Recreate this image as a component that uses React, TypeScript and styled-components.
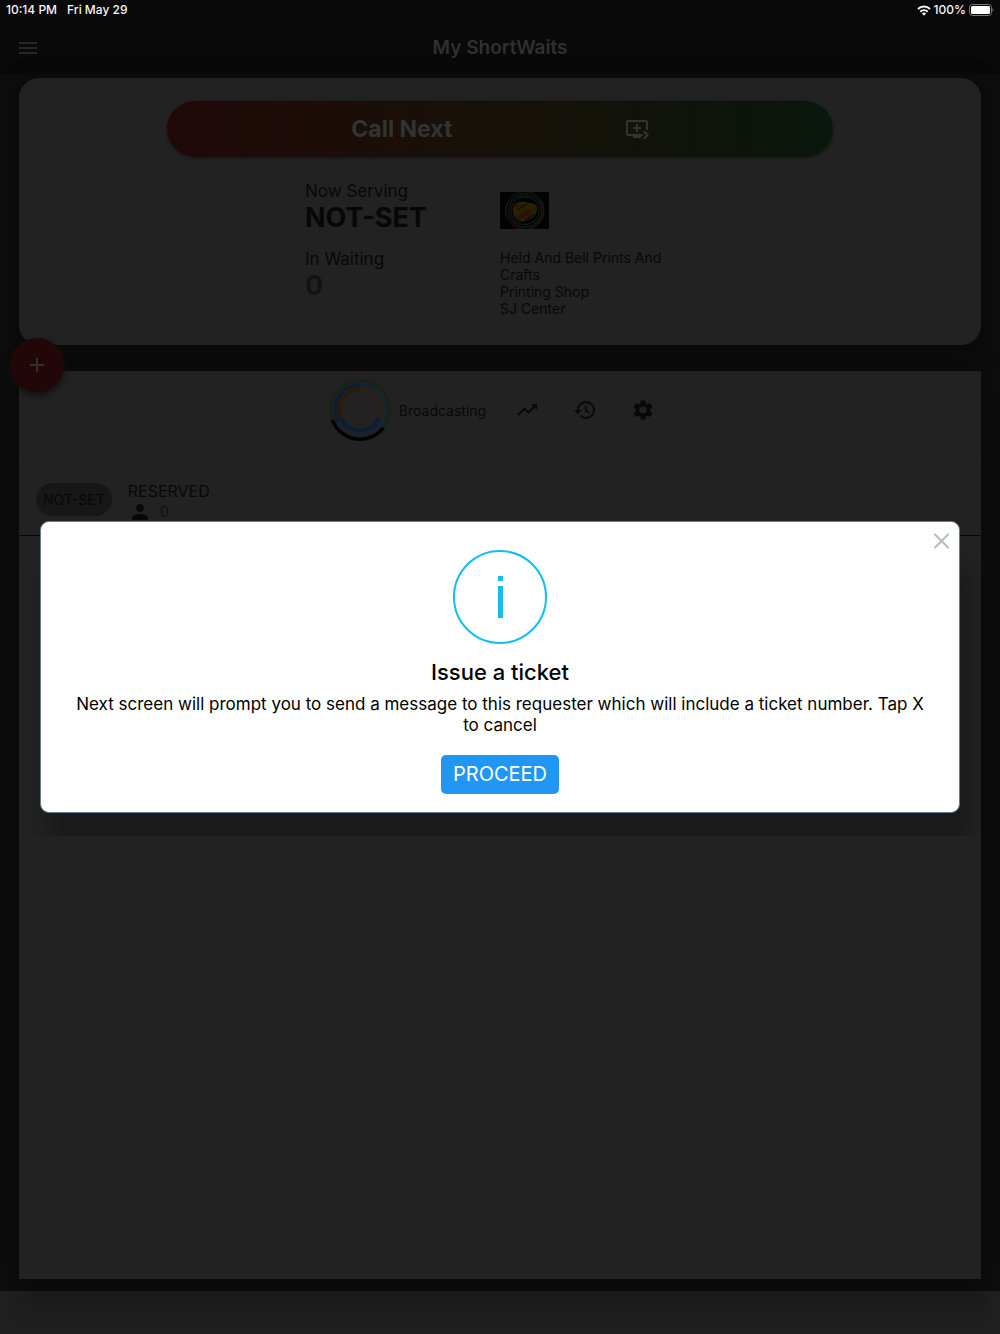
import React from "react";
import styled, { createGlobalStyle } from "styled-components";
import {
  MdMenu,
  MdTrendingUp,
  MdHistory,
  MdSettings,
  MdPerson,
  MdAdd,
  MdQueuePlayNext,
} from "react-icons/md";

const GlobalStyle = createGlobalStyle`
  *, *::before, *::after { box-sizing: border-box; }
  body {
    margin: 0;
    background: #0d0d0d;
    color: #080808;
    font-family: Inter, "Liberation Sans", sans-serif;
  }
  h1, h2, p, dl, dd, dt, ul { margin: 0; padding: 0; }
  button { font: inherit; border: 0; padding: 0; background: none; color: inherit; cursor: pointer; }
`;

const Page = styled.div`
  display: flex;
  flex-direction: column;
  min-height: 100vh;
`;

const StatusBar = styled.div`
  position: relative;
  z-index: 3;
  display: flex;
  justify-content: space-between;
  height: 20px;
  padding: 0 6px;
  background: #090909;
  color: #f4f4f4;
  font-size: 12px;
  font-weight: 500;
  line-height: 20px;
`;

const StatusGroup = styled.div<{ $gap: number }>`
  display: flex;
  align-items: center;
  gap: ${(p) => p.$gap}px;
`;

const Header = styled.header`
  display: grid;
  grid-template-columns: 1fr auto 1fr;
  align-items: center;
  height: 54px;
  padding: 1px 16px 0;
  background: #090909;
  color: #303030;
`;

const MenuButton = styled.button`
  display: flex;
  width: 24px;
  font-size: 24px;
  color: #272727;
`;

const Title = styled.h1`
  font-size: 19px;
  font-weight: 600;
  line-height: 24px;
`;

const Main = styled.main`
  display: flex;
  flex: 1;
  flex-direction: column;
  gap: 26px;
  padding: 4px 19px 12px;
`;

const Summary = styled.section`
  position: relative;
  display: grid;
  grid-template-columns: 2fr 9fr 2fr;
  padding: 23px 0 28px;
  border-radius: 20px;
  background: #222222;
  box-shadow: 0 4px 20px 4px #0a0a0a;
`;

const SummaryBody = styled.div`
  grid-column: 2;
  display: flex;
  flex-direction: column;
  align-items: center;
  gap: 22px;
`;

const CallNext = styled.button`
  display: flex;
  align-items: center;
  justify-content: space-evenly;
  align-self: stretch;
  height: 56px;
  padding: 0 12px;
  border-radius: 28px;
  background: linear-gradient(90deg, #200908, #191009 40%, #13130a 65%, #0a170c);
  box-shadow: 0 1px 3px #141414;
  color: #333333;
  font-size: 23px;
  font-weight: 700;
`;

const Details = styled.div`
  display: grid;
  grid-template-columns: 1fr 1fr;
  width: 390px;
`;

const Stats = styled.dl`
  font-size: 17px;
  line-height: 24px;
`;

const StatValue = styled.dd<{ $dim?: boolean }>`
  margin-bottom: 14px;
  color: ${(p) => (p.$dim ? "#131313" : "#070707")};
  font-size: 27px;
  font-weight: 700;
  line-height: 30px;
`;

const Business = styled.div`
  display: flex;
  flex-direction: column;
  gap: 20px;
  padding-top: 13px;
  font-size: 14px;
  line-height: 17px;
`;

const AddButton = styled.button`
  position: absolute;
  left: -9px;
  bottom: -47px;
  display: grid;
  place-items: center;
  width: 54px;
  height: 54px;
  border-radius: 50%;
  background: #220708;
  box-shadow: 0 3px 6px #0f0f0f;
  color: #303030;
  font-size: 24px;
`;

const Panel = styled.section`
  flex: 1;
  background: #222222;
  box-shadow: 0 4px 20px 4px #0a0a0a;
`;

const Toolbar = styled.div`
  display: flex;
  align-items: center;
  justify-content: center;
  gap: 10px;
  height: 87px;
  padding: 0 4px 8px 0;
  border-bottom: 1px solid #2a2320;
`;

const Broadcast = styled.div`
  display: flex;
  align-items: center;
  gap: 8px;
  padding-right: 7px;
  font-size: 14px;
`;

const ToolButton = styled.button`
  display: grid;
  place-items: center;
  width: 48px;
  height: 48px;
  font-size: 24px;
`;

const Entry = styled.div`
  display: flex;
  align-items: center;
  gap: 16px;
  height: 78px;
  margin: 0 1px;
  padding: 6px 16px 0;
  border-bottom: 1px solid #060606;
`;

const Chip = styled.span`
  padding: 0 7px;
  border-radius: 17px;
  background: #171717;
  font-size: 14px;
  line-height: 33px;
`;

const EntryText = styled.div`
  padding-top: 4px;
  font-size: 16px;
  line-height: 20px;
`;

const Guests = styled.div`
  display: flex;
  align-items: center;
  gap: 8px;
  height: 22px;
  color: #131313;
  font-size: 15px;

  svg { color: #080808; }
`;

const ListArea = styled.div`
  height: 300px;
  padding: 44px 26px 0 44px;
  overflow: hidden;
`;

const ListCard = styled.div`
  height: 100%;
  background: #1a1a1a;
  box-shadow: 0 0 20px 12px #1a1a1a;
`;

const Footer = styled.footer`
  position: relative;
  height: 43px;
  background:
    linear-gradient(90deg, #202020, transparent 36px, transparent calc(100% - 20px), #202020),
    linear-gradient(#1a1a1a, #202020);
`;

const Overlay = styled.div`
  position: fixed;
  inset: 0;
  z-index: 2;
  display: flex;
  align-items: center;
  padding: 0 40px;
`;

const Dialog = styled.div`
  position: relative;
  display: flex;
  flex: 1;
  flex-direction: column;
  align-items: center;
  padding: 28px 28px 18px;
  border: 1px solid #5f7f8c;
  border-radius: 9px;
  background: #ffffff;
  color: #000000;
  text-align: center;
`;

const InfoIcon = styled.svg`
  width: 94px;
  height: 94px;
`;

const DialogTitle = styled.h2`
  margin-top: 12px;
  font-size: 22px;
  font-weight: 500;
  line-height: 32px;
`;

const Message = styled.p`
  margin-top: 6px;
  font-size: 17px;
  line-height: 21px;
`;

const Proceed = styled.button`
  margin-top: 19px;
  padding: 0 12px;
  border-radius: 5px;
  background: #2196f3;
  color: #ffffff;
  font-size: 20px;
  line-height: 39px;
`;

const CloseButton = styled.button`
  position: absolute;
  top: 8px;
  right: 7px;
  display: flex;
  color: #b3bdc9;
`;

function Wifi() {
  return (
    <svg width="14" height="11" viewBox="0 0 14 11" fill="none" stroke="#f4f4f4" strokeWidth="2">
      <path d="M1 4a8.6 8.6 0 0 1 12 0" />
      <path d="M3.3 6.700a5.300 5.300 0 0 1 7.400 0" />
      <path d="M7 10.800 4.900 8.600a3 3 0 0 1 4.200 0z" fill="#f4f4f4" stroke="none" />
    </svg>
  );
}

function Battery() {
  return (
    <svg width="25" height="12" viewBox="0 0 25 12">
      <rect x=".5" y=".5" width="22" height="11" rx="3" fill="none" stroke="#777" />
      <rect x="2" y="2" width="19" height="8" rx="1.6" fill="#fff" />
      <path d="M23.500 4v4c1.300-.6 1.300-3.400 0-4z" fill="#777" />
    </svg>
  );
}

function Close() {
  return (
    <svg width="22" height="22" viewBox="0 0 22 22" stroke="currentColor" strokeWidth="2">
      <path d="M5 4.500 18 17.500M18 4.500 5 17.500" strokeLinecap="round" />
    </svg>
  );
}

function Rings() {
  return (
    <svg width="62" height="62" viewBox="-31 -31 62 62" fill="none" strokeWidth="3.4">
      <circle r="29.300" stroke="#182219" />
      <path d="M-27.500 10A29.300 29.300 0 0 0 23.300 17.800" stroke="#030303" />
      <circle r="24.800" stroke="#172330" />
      <path d="M0-24.800A24.800 24.800 0 0 0-22 11.500" stroke="#0b1d30" />
      <path d="M0-20.500A20.500 20.500 0 0 0-18.900 8" stroke="#2c1a06" />
      <path d="M0-20.500A20.500 20.500 0 0 1 18.900 8" stroke="#2c2014" />
      <path d="M-18.900 8A20.500 20.500 0 0 0 18.900 8" stroke="#0b1d30" />
    </svg>
  );
}

function Logo() {
  return (
    <svg width="49" height="37" viewBox="0 0 49 37" fill="none">
      <rect width="49" height="37" fill="#020202" />
      <circle cx="25" cy="18.500" r="19" stroke="#221c10" />
      <path d="M6 24A19.500 19.500 0 0 1 16 2" stroke="#0b1524" strokeWidth="1.200" />
      <circle cx="25" cy="18.500" r="16.500" stroke="#0a1c12" strokeWidth="1.500" />
      <path d="M41 9A18 18 0 0 1 30 35" stroke="#260c0a" strokeWidth="2" />
      <path d="M9 20a16 16 0 0 0 14 15" stroke="#240a0a" strokeWidth="2" />
      <circle cx="25" cy="18.500" r="14" stroke="#0b1c1c" strokeWidth="1.300" />
      <path d="M13 15c1-5 8-6 12-5s12 1 12 6-2 9-7 11-8 4-12 1-6-8-5-13z" fill="#292006" />
      <path d="M18 17l9-5M25 28l9-6" stroke="#0c0c0c" strokeWidth="2" strokeDasharray="2 1" />
      <path d="M18 26l12-7" stroke="#2c0e08" strokeWidth="5" strokeDasharray="3 1" />
      <path d="M14 15l4-2" stroke="#2c0e08" strokeWidth="3" />
    </svg>
  );
}

export default function App() {
  return (
    <>
      <GlobalStyle />
      <Page>
        <StatusBar>
          <StatusGroup $gap={10}>
            <span>10:14 PM</span>
            <span>Fri May 29</span>
          </StatusGroup>
          <StatusGroup $gap={3}>
            <Wifi />
            <span>100%</span>
            <Battery />
          </StatusGroup>
        </StatusBar>
        <Header>
          <MenuButton aria-label="Menu"><MdMenu /></MenuButton>
          <Title>My ShortWaits</Title>
        </Header>
        <Main>
          <Summary>
            <SummaryBody>
              <CallNext>
                Call Next
                <MdQueuePlayNext size={24} />
              </CallNext>
              <Details>
                <Stats>
                  <dt>Now Serving</dt>
                  <StatValue>NOT-SET</StatValue>
                  <dt>In Waiting</dt>
                  <StatValue $dim>0</StatValue>
                </Stats>
                <Business>
                  <Logo />
                  <div>
                    <p>Held And Bell Prints And Crafts</p>
                    <p>Printing Shop</p>
                    <p>SJ Center</p>
                  </div>
                </Business>
              </Details>
            </SummaryBody>
            <AddButton aria-label="Add"><MdAdd /></AddButton>
          </Summary>
          <Panel>
            <Toolbar>
              <Broadcast>
                <Rings />
                <span>Broadcasting</span>
              </Broadcast>
              <ToolButton aria-label="Trends"><MdTrendingUp /></ToolButton>
              <ToolButton aria-label="History"><MdHistory /></ToolButton>
              <ToolButton aria-label="Settings"><MdSettings /></ToolButton>
            </Toolbar>
            <Entry>
              <Chip>NOT-SET</Chip>
              <EntryText>
                <div>RESERVED</div>
                <Guests><MdPerson size={24} /><span>0</span></Guests>
              </EntryText>
            </Entry>
            <ListArea><ListCard /></ListArea>
          </Panel>
        </Main>
        <Footer />
      </Page>
      <Overlay>
        <Dialog role="dialog" aria-modal="true" aria-labelledby="dialog-title">
          <CloseButton aria-label="Close"><Close /></CloseButton>
          <InfoIcon viewBox="0 0 94 94" aria-hidden="true">
            <circle cx="47" cy="47" r="46" fill="none" stroke="#13bdec" strokeWidth="2" />
            <rect x="45" y="26" width="5" height="5" fill="#13bdec" />
            <rect x="45" y="36" width="5" height="32" fill="#13bdec" />
          </InfoIcon>
          <DialogTitle id="dialog-title">Issue a ticket</DialogTitle>
          <Message>
            Next screen will prompt you to send a message to this requester which will include a
            ticket number. Tap X to cancel
          </Message>
          <Proceed>PROCEED</Proceed>
        </Dialog>
      </Overlay>
    </>
  );
}
